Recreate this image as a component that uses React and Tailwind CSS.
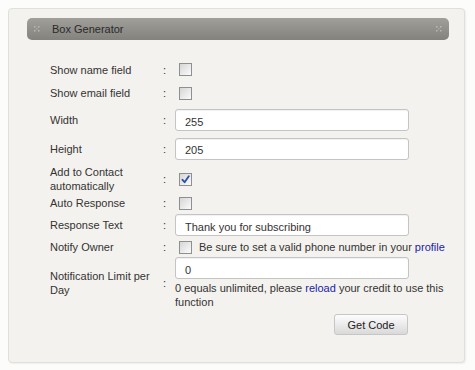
import React from "react";

function Grip() {
  return (
    <svg width="6" height="6" viewBox="0 0 6 6" className="shrink-0">
      <rect x="0" y="0" width="1.5" height="1.5" fill="#b9b8b3" />
      <rect x="4" y="0" width="1.5" height="1.5" fill="#b9b8b3" />
      <rect x="2" y="2" width="1.5" height="1.5" fill="#a9a8a3" />
      <rect x="0" y="4" width="1.5" height="1.5" fill="#b9b8b3" />
      <rect x="4" y="4" width="1.5" height="1.5" fill="#b9b8b3" />
    </svg>
  );
}

function Check({ checked }) {
  return (
    <span className="ml-[4px] flex h-[13px] w-[13px] shrink-0 items-center justify-center border border-[#8e8f8f] bg-gradient-to-br from-[#d6d6d6] to-[#fbfbfb]">
      {checked && (
        <svg width="9" height="9" viewBox="0 0 9 9">
          <path d="M1.5 4.8 L3.6 7.2 L7.8 1.2" fill="none" stroke="#2d4fa8" strokeWidth="1.8" strokeLinecap="round" strokeLinejoin="round" />
        </svg>
      )}
    </span>
  );
}

function TextBox({ value }) {
  return (
    <input
      readOnly
      defaultValue={value}
      className="h-[22px] w-[234px] rounded-[3px] border border-[#c4c4c4] bg-white pl-[9px] pt-[3px] text-[11px] text-[#333] shadow-[inset_0_1px_1px_rgba(0,0,0,0.06)] outline-none font-['Liberation_Sans',Arial,sans-serif]"
    />
  );
}

function Label({ children }) {
  return <div className="w-[113px] shrink-0 leading-[14px]">{children}</div>;
}

function Colon() {
  return <div className="w-[12px] shrink-0 leading-[14px]">:</div>;
}

export default function App() {
  return (
    <div className="min-h-[370px] w-[475px] bg-[#fcfcfa] pt-[8px] pl-[8px] font-['Liberation_Sans',Arial,sans-serif] text-[11px] text-[#333]">
      <div className="h-[355px] w-[457px] rounded-[4px] border border-[#e0dfda] bg-[#f3f2ee] pt-[9px] shadow-[1px_1px_2px_rgba(0,0,0,0.06)]">
        <div className="ml-[18px] flex h-[22px] w-[422px] items-center rounded-[5px] bg-gradient-to-b from-[#a09f9a] to-[#83827d] pl-[7px] pr-[7px] text-[#2a2a2a]">
          <Grip />
          <span className="ml-[12px] flex-1 pt-[1px]">Box Generator</span>
          <Grip />
        </div>

        <div className="mt-[18px] pl-[41px]">
          <div className="flex h-[23px] items-center">
            <Label>Show name field</Label>
            <Colon />
            <Check />
          </div>
          <div className="flex h-[24px] items-center">
            <Label>Show email field</Label>
            <Colon />
            <Check />
          </div>
          <div className="flex h-[30px] items-center">
            <Label>Width</Label>
            <Colon />
            <TextBox value="255" />
          </div>
          <div className="flex h-[27px] items-center">
            <Label>Height</Label>
            <Colon />
            <TextBox value="205" />
          </div>
          <div className="flex h-[34px] items-center">
            <Label>Add to Contact automatically</Label>
            <Colon />
            <Check checked />
          </div>
          <div className="flex h-[14px] items-center">
            <Label>Auto Response</Label>
            <Colon />
            <Check />
          </div>
          <div className="flex h-[30px] items-center">
            <Label>Response Text</Label>
            <Colon />
            <TextBox value="Thank you for subscribing" />
          </div>
          <div className="flex h-[14px] items-center">
            <Label>Notify Owner</Label>
            <Colon />
            <Check />
            <span className="ml-[7px] leading-[14px]">
              Be sure to set a valid phone number in your{" "}
              <a className="text-[#1c1ca8]">profile</a>
            </span>
          </div>
          <div className="flex h-[58px] items-center">
            <Label>Notification Limit per Day</Label>
            <Colon />
            <div className="flex flex-col">
              <TextBox value="0" />
              <div className="mt-[2px] w-[273px] leading-[14px]">
                0 equals unlimited, please <a className="text-[#1c1ca8]">reload</a> your credit to use this function
              </div>
            </div>
          </div>
          <div className="mt-[2px] flex pl-[284px]">
            <button className="h-[21px] w-[74px] rounded-[3px] border border-[#c6c6c6] bg-gradient-to-b from-[#fdfdfd] to-[#d9d9d9] pt-[1px] text-[11px] text-[#222] font-['Liberation_Sans',Arial,sans-serif]">
              Get Code
            </button>
          </div>
        </div>
      </div>
    </div>
  );
}
